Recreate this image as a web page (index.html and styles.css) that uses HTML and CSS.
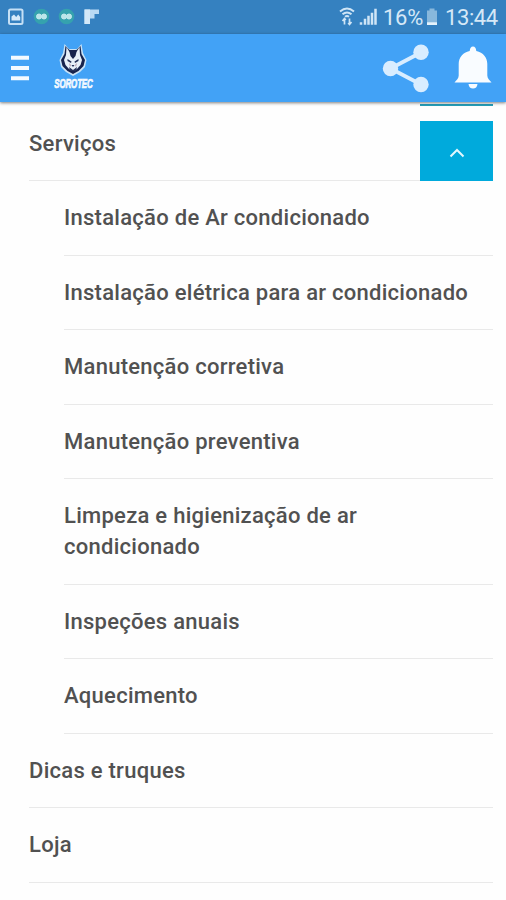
FILE: index.html
```html
<!DOCTYPE html>
<html lang="pt-BR">
<head>
<meta charset="utf-8">
<title>Sorotec</title>
<link rel="stylesheet" href="styles.css">
</head>
<body>
<div class="status">
  <svg class="notifications" width="110" height="34" viewBox="0 0 110 34">
    <rect x="9" y="9.500" width="13.500" height="14.500" rx="1.500" fill="none" stroke="#c5e0f5" stroke-width="2"/>
    <path d="M11.500 20.500v-4l2.500-2 2.200 2.500 2-2.500 2 2.500v3.500z" fill="#d6eafa"/>
    <circle cx="41.500" cy="16.500" r="7.800" fill="#35a2ae"/>
    <circle cx="66.500" cy="16.500" r="7.800" fill="#35a2ae"/>
    <g fill="#b9e5e9" stroke="#c4e9ed" stroke-width="1"><circle cx="39" cy="16.500" r="2.500"/><circle cx="44" cy="16.500" r="2.500"/><circle cx="64" cy="16.500" r="2.500"/><circle cx="69" cy="16.500" r="2.500"/></g>
    <path d="M84.500 9.500H99v4.500h-4.500v4.500H90v5.500h-5.500z" fill="#b9daf4"/>
    <path d="M84.500 9.500H90v14.500h-5.500z" fill="#d3e8f8"/>
  </svg>
  <div class="indicators">
    <svg width="40" height="34" viewBox="0 0 40 34" fill="none" stroke="#cfe5f6">
      <path d="M1 11.500Q8 5.500 15 11.500M3.500 14.300Q8 10.500 12.500 14.300M6 16.800Q8 15.300 10 16.800" stroke-width="1.900"/>
      <path d="M5.500 24.500v-6M3.500 21l2-2.500 1.300 1.500M10.500 18.500v6M9.200 23l1.300 1.500 2-2.500" stroke-width="1.700"/>
      <path d="M22 24.800v-2.500M26 24.800v-6M29.500 24.800v-9M33 24.800v-12M36.500 24.800v-16" stroke-width="2.500"/>
    </svg>
    <span class="percent">16%</span>
    <svg class="battery" width="12" height="34" viewBox="0 0 12 34"><path d="M3.500 8.500h5v2h2.500v14H1v-14h2.500z" fill="#88b8dc"/><path d="M1 22.300h10v2.700H1z" fill="#e5f3fc"/></svg>
    <span class="clock">13:44</span>
  </div>
</div>
<header class="bar">
  <svg class="menu" width="20" height="26" viewBox="0 0 20 26"><path d="M1 2.700h18M1 13h18M1 23.300h18" stroke="#f4faff" stroke-width="4"/></svg>
  <div class="brand">
    <svg width="28" height="33" viewBox="0 0 28 33">
      <path d="M5.500 1l4.500 5h8l4.500-5 1.500 9 3.500 7-1.500 7-5 5-7 4-7-4-5-5-1.500-7L4 10z" fill="#c9e3f7"/>
      <path d="M6.500 3l4 4h7l4-4 1 8 3.500 6-1.500 6-5 5-5.500 3-5.500-3-5-5L2 17l3.500-6z" fill="#17234d"/>
      <path d="M7.500 4l3 5 1 4L14 16l2.500-3 1-4 3-5 .5 8 2 5-1.500 5-3.500 4-4 2-4-2-3.500-4L5 17l2-5z" fill="#e7eff8"/>
      <path d="M8.500 16l4 2.500-.5 1.500-3.500-2zm11 0-4 2.500.5 1.500 3.500-2zM12.500 22h3L14 24zM10 24l4 3 4-3-1 4h-6z" fill="#26325a"/>
      <path d="M10 20l2 2-1 2zm8 0-2 2 1 2z" fill="#b89aa8"/>
    </svg>
    <span class="name">SOROTEC</span>
  </div>
  <svg class="share" width="48" height="50" viewBox="0 0 48 50"><path d="M39 9.500L8.500 25.500l30.500 16" fill="none" stroke="#d9edff" stroke-width="3.800"/><g fill="#d9edff"><circle cx="39" cy="9.200" r="7.700"/><circle cx="8.500" cy="25.500" r="7.700"/><circle cx="39" cy="41.500" r="7.700"/></g></svg>
  <svg class="bell" width="38" height="46" viewBox="0 0 38 46" fill="#f9fcff"><path d="M19 1.500c2 0 3 1.500 3.300 4.500 7 1.500 11 6.500 11 13v11.500c0 3 2.200 4.500 4.200 7H.5c2-2.500 4.200-4 4.200-7V19c0-6.500 4-11.500 11-13C16 3 17 1.500 19 1.500z"/><path d="M14.500 39h9c-.3 3-2 4.500-4.500 4.500s-4.200-1.500-4.500-4.500z"/></svg>
</header>
<main>
  <div class="peek"></div>
  <ul class="list">
    <li class="row first"><span>Serviços</span><button class="toggle" aria-label="Recolher"><svg width="16" height="10" viewBox="0 0 16 10"><path d="M1.500 8.500L8 2l6.500 6.500" fill="none" stroke="#e2f7fd" stroke-width="2"/></svg></button></li>
    <li>
      <ul class="list sub">
        <li class="row">Instalação de Ar condicionado</li>
        <li class="row">Instalação elétrica para ar condicionado</li>
        <li class="row">Manutenção corretiva</li>
        <li class="row">Manutenção preventiva</li>
        <li class="row double">Limpeza e higienização de ar<br>condicionado</li>
        <li class="row">Inspeções anuais</li>
        <li class="row">Aquecimento</li>
      </ul>
    </li>
    <li class="row">Dicas e truques</li>
    <li class="row">Loja</li>
  </ul>
</main>
</body>
</html>
```
FILE: styles.css
```css
* { box-sizing: border-box; }
body { margin: 0; height: 900px; overflow: hidden; background: #fefefe; font-family: Roboto, sans-serif; }
svg { display: block; flex: none; }
.status { height: 34px; display: flex; justify-content: space-between; background: #3581c0; color: #d5e8f7; }
.indicators { display: flex; padding-right: 8px; font-size: 22px; line-height: 35px; }
.percent { width: 40px; margin-left: 4px; letter-spacing: -.3px; }
.battery { margin-left: 3px; }
.clock { width: 53px; margin-left: 7px; white-space: nowrap; letter-spacing: -.4px; }
.bar { position: relative; height: 68px; display: flex; align-items: center; padding: 0 14px 0 10px; background: #42a2f6; box-shadow: 0 1px 3px rgba(0,0,0,.5); }
.brand { width: 44px; height: 48px; margin-left: 21px; margin-top: -2px; display: flex; flex-direction: column; align-items: center; }
.name { color: #f4f9ff; font: italic 700 13px/15px "Liberation Sans", sans-serif; letter-spacing: -.2px; transform: scaleX(.61); -webkit-text-stroke: .7px #f4f9ff; }
.share { margin-left: auto; }
.bell { margin-left: 24px; }
main { padding: 0 13px 0 29px; }
.peek { width: 73px; height: 4px; margin-left: auto; border-bottom: 2px solid #269fba; }
.list { list-style: none; margin: 0; padding: 0; color: #515151; font-size: 22px; font-weight: 500; line-height: 31px; letter-spacing: .27px; }
.list.sub { padding-left: 35px; }
.row { height: 74.5px; display: flex; align-items: center; border-bottom: 1px solid #e9e9e9; }
.row.double { height: 105.500px; }
.row.first { height: 75px; justify-content: space-between; }
.toggle { width: 73px; height: 60px; margin: 15px 0 -1px; padding: 3px 0 0; border: 0; background: #00aadc; display: flex; align-items: center; justify-content: center; }
```
